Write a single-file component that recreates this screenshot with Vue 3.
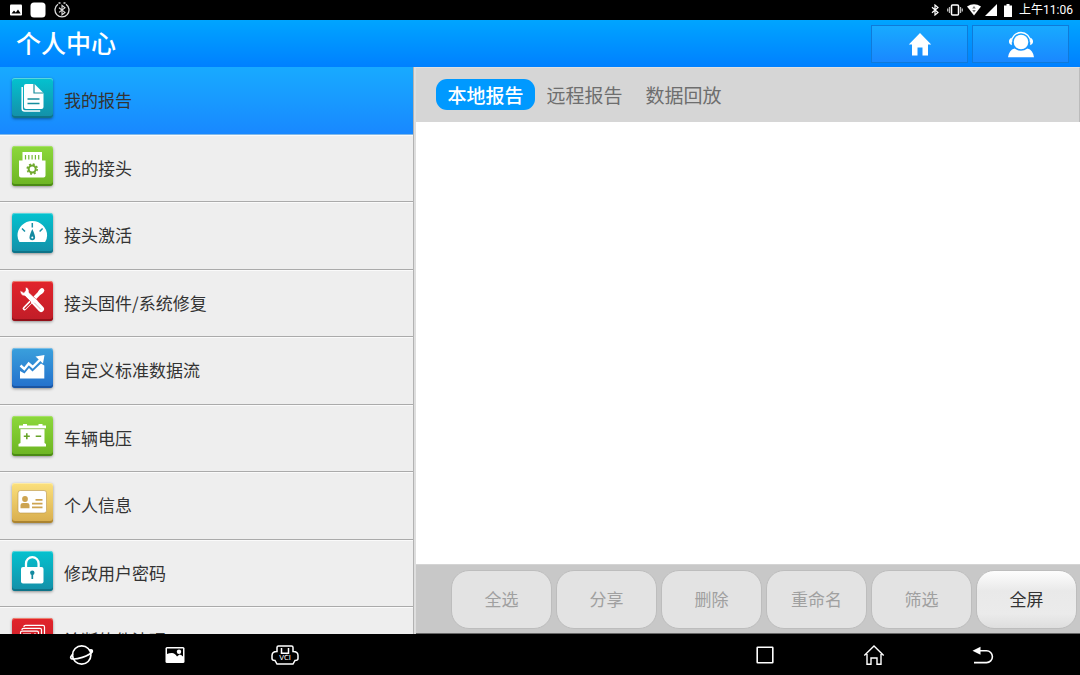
<script setup>
import { ref } from 'vue'

const menu = [
  { icon: 'report', label: '我的报告', tone: 'teal' },
  { icon: 'connector', label: '我的接头', tone: 'green' },
  { icon: 'gauge', label: '接头激活', tone: 'teal' },
  { icon: 'tools', label: '接头固件/系统修复', tone: 'red' },
  { icon: 'chart', label: '自定义标准数据流', tone: 'blue' },
  { icon: 'battery', label: '车辆电压', tone: 'green' },
  { icon: 'card', label: '个人信息', tone: 'gold' },
  { icon: 'lock', label: '修改用户密码', tone: 'teal' },
  { icon: 'clean', label: '诊断软件清理', tone: 'red' },
]
const tabs = ['本地报告', '远程报告', '数据回放']
const actions = [
  { label: '全选', disabled: true },
  { label: '分享', disabled: true },
  { label: '删除', disabled: true },
  { label: '重命名', disabled: true },
  { label: '筛选', disabled: true },
  { label: '全屏', disabled: false },
]
const current = ref('report')
const currentTab = ref('本地报告')
</script>

<template>
  <div class="screen">
    <div class="status">
      <div class="status-group left">
        <svg width="12" height="12" viewBox="0 0 12 12">
          <rect x="0" y="0.5" width="12" height="11" rx="1" fill="#fff" />
          <path d="M1.5 9.5 4 6.5l1.8 2L8 5.5l2.7 4z" fill="#000" />
        </svg>
        <svg width="16" height="16" viewBox="0 0 16 16">
          <rect x="0.5" y="0.5" width="15" height="15" rx="3.5" fill="#fff" />
        </svg>
        <svg width="16" height="16" viewBox="0 0 16 16" fill="none" stroke="#ddd">
          <path d="M4 2.200A7 7 0 1 0 12 2.200M4.500 1h2M9.500 1h2" stroke-width="1.300" />
          <path d="M5 5.800l6 4.600L8 12.800V3.400l3 2.400-6 4.600" stroke-width="1.100" />
        </svg>
      </div>
      <div class="status-group right">
        <svg class="bt" width="8" height="12" viewBox="0 0 8 12" fill="none" stroke="#fff" stroke-width="1.200">
          <path d="M1 3.200 7 8.500 4 11V1l3 2.500L1 8.800" />
        </svg>
        <svg width="16" height="12" viewBox="0 0 16 12" fill="none">
          <rect x="4.500" y="1" width="7" height="10" rx="1" stroke="#fff" stroke-width="1.500" />
          <path d="M2.500 3v6M13.500 3v6M.700 4.500v3M15.300 4.500v3" stroke="#bbb" stroke-width="1.300" />
        </svg>
        <svg width="14" height="12" viewBox="0 0 14 12">
          <path d="M0 2.600Q7-2 14 2.600L7 11.500z" fill="#fff" />
          <path d="M7 2 8.800 4.500H5.200zM7 8.500 5.200 6h3.600z" fill="#777" />
        </svg>
        <svg width="12" height="12" viewBox="0 0 12 12"><path d="M12 0v12H0z" fill="#fff" /></svg>
        <svg class="cell" width="8" height="13" viewBox="0 0 8 13">
          <path d="M2.500 0h3v1.500H8V13H0V1.500h2.500z" fill="#fff" />
        </svg>
        <time>上午11:06</time>
      </div>
    </div>

    <header class="header">
      <h1>个人中心</h1>
      <div class="header-actions">
        <button type="button" aria-label="主页">
          <svg width="24" height="24" viewBox="0 0 24 24">
            <path d="M12 1 23.200 12.500H20V23.500h-5.500v-8h-5v8H4v-11H.800z" fill="#fff" />
          </svg>
        </button>
        <button type="button" aria-label="客服">
          <svg width="28" height="28" viewBox="0 0 28 28">
            <circle cx="14" cy="12" r="7.300" fill="#fff" />
            <path d="M4.500 12a9.500 9.500 0 0 1 19 0" fill="none" stroke="#fff" stroke-width="1.300" />
            <path d="M4.800 7.800C1 9 1 14 4.800 15.200zM23.200 7.800C27 9 27 14 23.200 15.200z" fill="#fff" />
            <path d="M7.500 18.500Q14 23 20.500 18.500 26 20 27 27.300H1Q2 20 7.500 18.500" fill="#fff" />
          </svg>
        </button>
      </div>
    </header>

    <main class="main">
      <nav class="side">
        <button
          v-for="m in menu"
          :key="m.icon"
          type="button"
          class="row"
          :class="{ active: m.icon === current }"
          @click="current = m.icon"
        >
          <span class="tile" :class="m.tone">
            <svg width="41" height="40" viewBox="0 0 41 40">
              <g v-if="m.icon === 'report'">
                <path d="M10.200 9v21.500q0 2.500 2.500 2.500h15.500" fill="none" stroke="#fff" stroke-width="1.500" />
                <path d="M14 6h8.500l9 9v14q0 2-2 2H14q-2 0-2-2V8q0-2 2-2" fill="#fff" />
                <path d="M22 6v9h9.500" fill="none" stroke="#178d9c" stroke-width="1.200" />
                <path d="M15.500 21h12M15.500 25.500h12" stroke="#178d9c" stroke-width="1.600" />
              </g>
              <g v-else-if="m.icon === 'connector'">
                <path d="M10.500 6h19.500v8.500h3.500V29.500q0 2-2 2H9q-2 0-2-2V14.500h3.500z" fill="#fff" />
                <path d="M13.500 9v4.500M16.800 9v4.500M20.100 9v4.500M23.400 9v4.500M26.700 9v4.500" stroke="#74b936" stroke-width="1.200" />
                <circle cx="20.200" cy="23" r="3.500" fill="none" stroke="#6fa92d" stroke-width="2" />
                <circle cx="20.200" cy="23" r="5" fill="none" stroke="#6fa92d" stroke-width="1.500" stroke-dasharray="2 1.927" />
              </g>
              <g v-else-if="m.icon === 'gauge'">
                <path d="M7.500 29Q5.500 26 5.500 22.500a14.800 14.500 0 0 1 29.600 0q0 3.500-2 6.500z" fill="#fff" />
                <path d="M20.300 10v4.500M10 15.500l3 3M30.600 15.500l-3 3" stroke="#1690a6" stroke-width="1.500" />
                <path d="M20.300 16q2.800 6 2.800 8.500a2.800 2.800 0 0 1-5.600 0q0-2.500 2.800-8.500" fill="#148aa0" />
                <circle cx="20.300" cy="24.500" r="1" fill="#fff" />
              </g>
              <g v-else-if="m.icon === 'tools'" fill="none" stroke="#fff" stroke-linecap="round">
                <path d="M28 11.500 12.500 27.500" stroke-width="3.800" />
                <path d="M19 21.500 13 27.500" stroke="#c9202a" stroke-width="1.300" />
                <path d="M30 9.500l-1.500 1.500" stroke-width="4.600" />
                <path d="M8 9.500q.500 5.500 5 5.500L22 24l4-4-9-8.500q.500-4.500-3.500-5.500v3.500l-1.500 2z" fill="#fff" stroke="#d3222b" stroke-width=".600" />
                <path d="M22 20.500l7 7.500" stroke-width="6" />
                <path d="M22.500 22l6 6" stroke="#db9da0" stroke-width=".800" />
              </g>
              <g v-else-if="m.icon === 'chart'" fill="#fff">
                <path d="M8 23 12.500 25.500 17 20 20.500 23.500 29 15.500l3.300 2V30.500H8z" />
                <path d="M8.500 17.500l3.800 3.500L16.700 15.500l4 3.500 9-9" fill="none" stroke="#fff" stroke-width="2.400" />
                <path d="M23.500 8.500 32.500 7 31 15.500z" />
              </g>
              <g v-else-if="m.icon === 'battery'" fill="#fff">
                <path d="M11 8h4v1.500h11.500V8h4v1.500H34V13H32.500V27L34 28v2.500H6.500V28L8.500 27V13H7V9.500h4z" />
                <path d="M7 12.700h27" stroke="#79b637" stroke-width=".800" />
                <path d="M11.800 20.200h6M14.800 17.200v6M23.700 20.200h5.500" stroke="#67a329" stroke-width="1.600" />
              </g>
              <g v-else-if="m.icon === 'card'">
                <rect x="6" y="7.500" width="28.500" height="22.500" rx="2.500" fill="#fff" stroke="#b9944a" stroke-width=".600" />
                <circle cx="13" cy="16" r="2.900" fill="#cda451" />
                <path d="M8.500 25.300V22q0-2 2.500-2h4q2.500 0 2.500 2v3.300zM23.500 16h7v1.800h-7zM20 19.800h10.500v1.800H20zM20 23.500h10.500v1.800H20z" fill="#cda451" />
              </g>
              <g v-else-if="m.icon === 'lock'">
                <path d="M14 17v-4.500a6.300 6.300 0 0 1 12.600 0V17" fill="none" stroke="#fff" stroke-width="2.300" />
                <rect x="9" y="16" width="22.500" height="16.500" rx="2" fill="#fff" />
                <circle cx="20.300" cy="21.800" r="2.200" fill="#148aa0" />
                <path d="M20.300 22v6" stroke="#148aa0" stroke-width="1.700" />
              </g>
              <g v-else fill="none" stroke="#fff" stroke-width="1.200">
                <path d="M12 9V8.600q0-1.200 1.500-1.200h17.500q1.500 0 1.500 1.500v17" />
                <path d="M10 12v-.500q0-1.200 1.500-1.200h16.500q1.500 0 1.500 1.500V28" />
                <rect x="8.500" y="13.200" width="18" height="18" rx="1.500" />
                <path d="M11 16h8M22 16h2" />
              </g>
            </svg>
          </span>
          <span class="label">{{ m.label }}</span>
        </button>
      </nav>

      <section class="content">
        <div class="tabs" role="tablist">
          <button
            v-for="t in tabs"
            :key="t"
            type="button"
            role="tab"
            :aria-selected="t === currentTab"
            class="tab"
            :class="{ selected: t === currentTab }"
            @click="currentTab = t"
          >{{ t }}</button>
        </div>
        <div class="reports"></div>
        <div class="toolbar">
          <button v-for="a in actions" :key="a.label" type="button" class="action" :disabled="a.disabled">{{ a.label }}</button>
        </div>
      </section>
    </main>

    <footer class="system">
      <div class="keys shortcuts">
        <button type="button" aria-label="浏览器">
          <svg width="28" height="24" viewBox="0 0 28 24" fill="none" stroke="#fff" stroke-width="1.700">
            <circle cx="13.700" cy="12" r="9.200" />
            <path d="M5 11Q1.500 14.500 3.200 15.600C7 17.200 22 13 24.300 8.500Q24.800 6.500 21 6.800" />
            <circle cx="23.500" cy="8" r="1.600" fill="#fff" stroke="none" />
          </svg>
        </button>
        <button type="button" aria-label="图库">
          <svg width="28" height="24" viewBox="0 0 28 24">
            <rect x="4.500" y="4" width="19" height="16" rx="1.500" fill="#fff" />
            <path d="M6 11V5.500h16V13.500q-2-2-3.500-2l-2.500 2q-2-3.500-5-3.500T6 11z" fill="#000" />
            <circle cx="18" cy="8.700" r="2.200" fill="#fff" />
          </svg>
        </button>
        <button type="button" class="vci" aria-label="VCI">
          <svg width="28" height="24" viewBox="0 0 28 24" fill="none" stroke="#fff" stroke-width="1.500">
            <path d="M7.500 3h13q1.500 0 1.500 1.500v4q5 0 5 4v3q0 2-3 2l-2 3.500H6l-2-3.500q-3 0-3-2v-3q0-4 5-4v-4Q6 3 7.500 3z" />
            <path d="M10.500 5v5.300h7V5" />
            <text x="14" y="17" text-anchor="middle" fill="#fff" stroke="none" class="vci-text">VCI</text>
          </svg>
        </button>
      </div>
      <div class="keys">
        <button type="button" aria-label="最近任务">
          <svg width="28" height="24" viewBox="0 0 28 24"><rect x="6.200" y="4.200" width="15.600" height="15.600" rx=".500" fill="none" stroke="#fff" stroke-width="1.600" /></svg>
        </button>
        <button type="button" aria-label="桌面">
          <svg width="28" height="24" viewBox="0 0 28 24" fill="none" stroke="#fff" stroke-width="1.400">
            <path d="M4.300 12.500 14 3l9.700 9.500M7 11v10.300h4V15h6v6.300h4V11" />
          </svg>
        </button>
        <button type="button" aria-label="返回">
          <svg width="28" height="24" viewBox="0 0 28 24">
            <path d="M9 7.800h8.500a5.900 5.900 0 0 1 0 11.800H5" fill="none" stroke="#fff" stroke-width="1.600" />
            <path d="M3.500 7.800l8-4v8z" fill="#fff" />
          </svg>
        </button>
      </div>
    </footer>
  </div>
</template>

<style>
body {
  margin: 0;
  background: #000;
}
</style>

<style scoped>
.screen {
  display: flex;
  flex-direction: column;
  height: 100vh;
  overflow: hidden;
  font-family: "Noto Sans CJK SC", "Noto Sans", sans-serif;
  color: #333;
}
button {
  margin: 0;
  padding: 0;
  border: 0;
  background: none;
  font: inherit;
  color: inherit;
}
svg {
  display: block;
  flex: none;
}
.status {
  display: flex;
  justify-content: space-between;
  align-items: center;
  height: 20px;
  padding: 0 7px 0 10px;
  background: #000;
  color: #fff;
}
.status-group {
  display: flex;
  align-items: center;
}
.left {
  gap: 8px;
}
.right {
  gap: 4px;
}
.bt {
  margin-right: 4px;
}
.right .cell {
  margin: 0 3px;
}
time {
  font: 12px/20px Roboto, "Noto Sans CJK SC", sans-serif;
}
.header {
  display: flex;
  justify-content: space-between;
  align-items: center;
  height: 47px;
  padding: 0 11px 0 16px;
  background: linear-gradient(#00a5ff, #0080ff);
}
h1 {
  margin: 0;
  color: #fff;
  font-size: 25px;
  line-height: 44px;
  font-weight: 500;
  align-self: flex-start;
}
.header-actions {
  display: flex;
  gap: 4px;
}
.header-actions button {
  display: flex;
  justify-content: center;
  align-items: center;
  width: 97px;
  height: 38px;
  border: 1px solid #0f7ad9;
  background: linear-gradient(#18aaff, #1a88ff);
}
.main {
  display: flex;
  flex: 1;
  min-height: 0;
}
.side {
  flex: 0 0 413px;
  display: flex;
  flex-direction: column;
  overflow: hidden;
  border-right: 1px solid #b2b2b2;
  background: #eee;
}
.row {
  display: flex;
  flex: none;
  align-items: flex-start;
  gap: 11px;
  height: 67px;
  padding: 10px 12px 0;
  border-top: 1px solid #fafafa;
  border-bottom: 1px solid #aaa;
  background: #eee;
  text-align: left;
  font-size: 17px;
  line-height: 44px;
  box-sizing: border-box;
}
.row:nth-child(odd) {
  height: 68px;
}
.row.active {
  border-top-color: #18aaff;
  border-bottom-color: #82b9e8;
  background: linear-gradient(#18aaff, #1888ff);
}
.tile {
  flex: none;
  height: 40px;
  border-radius: 3px;
}
.teal {
  background: linear-gradient(#04c2cf, #148fa8);
  box-shadow: inset 0 1px #59d6dd, inset 0 -2px #0f7388, 0 1px 3px rgba(0, 0, 0, 0.4);
}
.green {
  background: linear-gradient(#8cd83c, #6db422);
  box-shadow: inset 0 1px #a5e265, inset 0 -2px #4b8a14, 0 1px 3px rgba(0, 0, 0, 0.4);
}
.red {
  background: linear-gradient(#e2242b, #c01d28);
  box-shadow: inset 0 1px #ee8070, inset 0 -2px #921019, 0 1px 3px rgba(0, 0, 0, 0.4);
}
.blue {
  background: linear-gradient(#3aa0dc, #2370cc);
  box-shadow: inset 0 1px #79bfe8, inset 0 -2px #1b55a2, 0 1px 3px rgba(0, 0, 0, 0.4);
}
.gold {
  background: linear-gradient(#fbe07c, #d8ad4d);
  box-shadow: inset 0 1px #fdeba6, inset 0 -2px #ab8430, 0 1px 3px rgba(0, 0, 0, 0.4);
}
.content {
  flex: 1;
  display: flex;
  flex-direction: column;
  min-width: 0;
  border-left: 2px solid #dedede;
  background: #fff;
}
.tabs {
  display: flex;
  align-items: flex-start;
  height: 55px;
  padding: 11px 0 0 20px;
  border-top: 1px solid #e0e0e0;
  border-right: 1px solid #bbb;
  background: #d6d6d6;
  box-sizing: border-box;
}
.tab {
  width: 99px;
  height: 31px;
  border-radius: 11px;
  color: #6e6e6e;
  font-size: 19px;
  line-height: 30px;
  white-space: nowrap;
}
.tab.selected {
  background: #0099ff;
  color: #fff;
  font-weight: 500;
}
.reports {
  flex: 1;
}
.toolbar {
  display: flex;
  justify-content: flex-end;
  align-items: flex-start;
  gap: 4px;
  height: 70px;
  padding: 5px 3px 0;
  border-top: 1px solid #d4d4d4;
  border-bottom: 1px solid #666;
  background: #c8c8c8;
  box-sizing: border-box;
}
.action {
  width: 101px;
  height: 59px;
  padding-bottom: 2px;
  border: 1px solid #bdbdbd;
  border-radius: 18px;
  background: linear-gradient(#fdfdfd, #e9e9e9 35%, #ebebeb 75%, #dedede);
  font-size: 17px;
}
.action:disabled {
  background: #e3e3e3;
  color: #a0a0a0;
}
.system {
  display: flex;
  justify-content: space-between;
  align-items: center;
  height: 41px;
  padding: 0 83px 0 68px;
  background: #000;
}
.keys {
  display: flex;
  gap: 81px;
}
.shortcuts {
  gap: 65px;
}
.vci {
  margin-left: 17px;
}
.vci-text {
  font: 7px "DejaVu Sans", sans-serif;
}
</style>
